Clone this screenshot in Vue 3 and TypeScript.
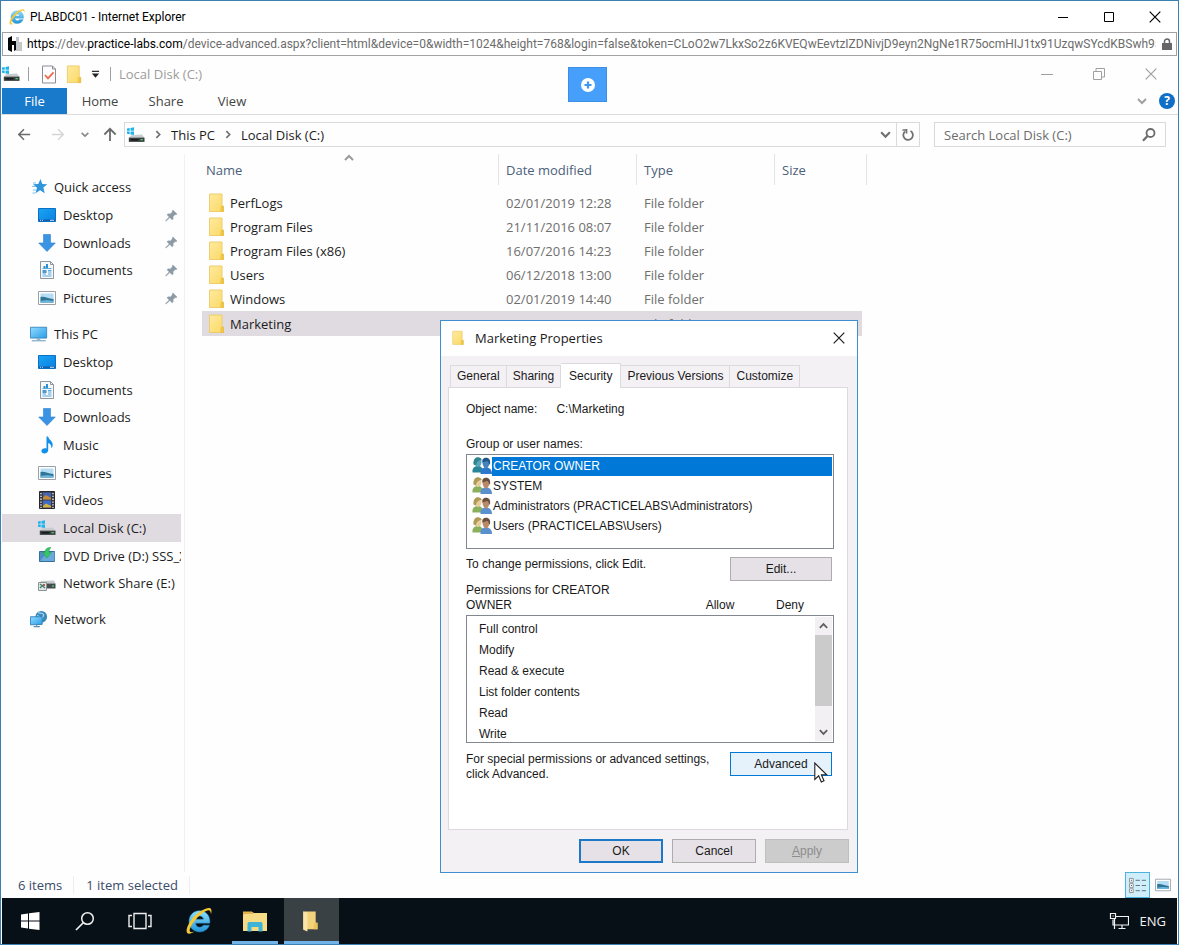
<script setup lang="ts">
import { ref } from 'vue'

interface NavItem {
  label: string
  icon: string
  root?: boolean
  pinned?: boolean
}
interface FileRow {
  name: string
  date: string
}

const ribbonTabs: string[] = ['Home', 'Share', 'View']

const navGroups: NavItem[][] = [
  [
    { label: 'Quick access', icon: 'star', root: true },
    { label: 'Desktop', icon: 'desktop', pinned: true },
    { label: 'Downloads', icon: 'download', pinned: true },
    { label: 'Documents', icon: 'document', pinned: true },
    { label: 'Pictures', icon: 'picture', pinned: true },
  ],
  [
    { label: 'This PC', icon: 'pc', root: true },
    { label: 'Desktop', icon: 'desktop' },
    { label: 'Documents', icon: 'document' },
    { label: 'Downloads', icon: 'download' },
    { label: 'Music', icon: 'music' },
    { label: 'Pictures', icon: 'picture' },
    { label: 'Videos', icon: 'video' },
    { label: 'Local Disk (C:)', icon: 'disk' },
    { label: 'DVD Drive (D:) SSS_X', icon: 'dvd' },
    { label: 'Network Share (E:)', icon: 'netdrive' },
  ],
  [{ label: 'Network', icon: 'network', root: true }],
]
const currentFolder = ref('Local Disk (C:)')

const files: FileRow[] = [
  { name: 'PerfLogs', date: '02/01/2019 12:28' },
  { name: 'Program Files', date: '21/11/2016 08:07' },
  { name: 'Program Files (x86)', date: '16/07/2016 14:23' },
  { name: 'Users', date: '06/12/2018 13:00' },
  { name: 'Windows', date: '02/01/2019 14:40' },
  { name: 'Marketing', date: '10/01/2019 08:17' },
]
const selectedFile = ref('Marketing')

const dialogTabs: string[] = ['General', 'Sharing', 'Security', 'Previous Versions', 'Customize']
const activeTab = ref('Security')

const principals: string[] = [
  'CREATOR OWNER',
  'SYSTEM',
  'Administrators (PRACTICELABS\\Administrators)',
  'Users (PRACTICELABS\\Users)',
]
const selectedPrincipal = ref('CREATOR OWNER')

const permissions: string[] = ['Full control', 'Modify', 'Read & execute', 'List folder contents', 'Read', 'Write']
</script>

<template>
  <div class="browser">
    <svg class="sprite" aria-hidden="true">
      <defs>
        <linearGradient id="gBlue" x1="0" y1="0" x2="1" y2="1">
          <stop offset="0" stop-color="#1aa5f5" /><stop offset="1" stop-color="#0a7fe0" />
        </linearGradient>
        <linearGradient id="gSky" x1="0" y1="0" x2="1" y2="1">
          <stop offset="0" stop-color="#8fdcff" /><stop offset="1" stop-color="#2a9ce6" />
        </linearGradient>
        <linearGradient id="gIe" x1="0" y1="0" x2="0" y2="1">
          <stop offset="0" stop-color="#8fe0fb" /><stop offset="1" stop-color="#2295d8" />
        </linearGradient>
        <linearGradient id="gFolder" x1="0" y1="0" x2="1" y2="1">
          <stop offset="0" stop-color="#ffeaa0" /><stop offset="1" stop-color="#fbd964" />
        </linearGradient>
      </defs>
      <symbol id="i-ie" viewBox="0 0 24 24">
        <path d="M12.500 3.700c-5 0-8.500 3.700-8.500 8.500s3.500 8.500 8.500 8.500c3.700 0 6.500-2 7.800-5.300h-4.800c-.7 1-1.600 1.500-2.900 1.500-1.900 0-3.100-1.100-3.300-3.200h11.400c.5-5.800-3-10-8.200-10zM9.300 10.600c.4-1.600 1.500-2.600 3.200-2.600s2.800 1 3.100 2.600z" fill="url(#gIe)" stroke="#2687bd" stroke-width=".4" />
        <path d="M21.600 6.800C22.300 4 22.200 2 20.600 1.600 17.500 1 10 5 5.500 11.500 2 16.500 1 21 3.300 22c1.200.5 3-.2 5-1.600-1.900.7-3 .7-3.500 0-.9-1.500 1-5.500 4.600-9.600C13.500 6 18.300 2.800 20.300 3.500c.9.4 1.200 1.500 1.300 3.300z" fill="#f5c836" />
      </symbol>
      <symbol id="i-disk" viewBox="0 0 18 16">
        <path d="M0 1.500 2.700 1v2.800H0zM3.500.9 7 .3v3.500H3.500zM0 4.600h2.700v2.600L0 6.800zM3.500 4.600H7V8l-3.500-.6z" fill="#1fb4ee" />
        <path d="M4 8.200 15 7.500l2.500 3.300H2z" fill="#c9cccf" />
        <path d="M1.800 10.600h15.700v4.300H1.800z" fill="#3c4145" />
        <path d="M3.500 12h8v1.500h-8z" fill="#17191b" />
        <path d="M13.500 12h2.300v1.300h-2.300z" fill="#45d15d" />
      </symbol>
      <symbol id="i-folder" viewBox="0 0 16 20">
        <path d="M1 1h12.500v12.500H15V18.500H1z" fill="url(#gFolder)" stroke="#ecca62" stroke-width=".9" />
        <path d="M12.500 18.500v-4l1-1.500H15v5.500z" fill="#f3c848" stroke="#e3b83c" stroke-width=".6" />
      </symbol>
      <symbol id="i-star" viewBox="0 0 18 18">
        <path d="m10.500 1 1.800 5 5 .2-3.900 3.400 1.300 5.600-4.600-2.900-4.600 3 1.500-5.500L3 6.200l5.300-.1z" fill="#2f96dc" />
        <path d="M3 5h3M2 8.500h4M3 12h3M2.500 15h3" stroke="#7cc4ee" stroke-width="1.200" />
      </symbol>
      <symbol id="i-desktop" viewBox="0 0 18 18">
        <path d="M.5 2.500h17v13H.5z" fill="url(#gBlue)" stroke="#0b6fc2" />
        <path d="M1 13.500h16v1.500H1z" fill="#0d5fae" />
        <path d="M2 14.300h1M4 14.300h1M12 14.300h4" stroke="#fff" stroke-width=".8" />
      </symbol>
      <symbol id="i-download" viewBox="0 0 18 18">
        <path d="M5.500.5h7V9h4.800L9 17.500.7 9h4.800z" fill="#3b93e3" stroke="#2a7fd0" stroke-width=".6" />
      </symbol>
      <symbol id="i-document" viewBox="0 0 18 18">
        <path d="M2.500.5h10l3 3v14h-13z" fill="#f6f8fa" stroke="#8f979e" />
        <path d="M12.500.5v3h3" fill="none" stroke="#8f979e" />
        <path d="M4.500 7.500h9M4.500 13h3.500M10 11h3.500M10 13h3.500M4.500 15h9M10 9.500h3.500" stroke="#5aa9dc" />
        <path d="M8 3h2v4H8zM5.500 5h2v2h-2z" fill="#2b8fd6" /><path d="M4.500 9h4v3h-4z" fill="#4b9bcf" />
      </symbol>
      <symbol id="i-picture" viewBox="0 0 18 18">
        <path d="M.5 2.500h17v13H.5z" fill="#fff" stroke="#9aa0a6" />
        <path d="M2.500 4.500h13v9h-13z" fill="#b4dcf4" />
        <path d="M2.500 8c4-1 7 1.500 13 2v3.500h-13z" fill="#2f7596" />
        <path d="M2.500 12c5-1 8-.7 13 0v1.500h-13z" fill="#6fb6dc" />
      </symbol>
      <symbol id="i-pc" viewBox="0 0 20 18">
        <path d="M.5 1.500h18v12H.5z" fill="url(#gSky)" stroke="#3686bd" />
        <path d="M7.500 14h4v1.500h-4z" fill="#8fa8b8" /><path d="M2 16.500h15.500" stroke="#77a8c9" stroke-width="1.300" />
      </symbol>
      <symbol id="i-music" viewBox="0 0 18 18">
        <path d="M8.500.5h1.600c.4 3 4.600 4.300 4.600 8.300 0 1.700-.6 2.700-1.500 3.500.6-3-1-4.600-3-5.300v7.300c0 2-1.600 3.200-3.800 3.200-1.800 0-3-1-3-2.400 0-1.700 1.600-2.900 3.500-2.900.6 0 1.100.1 1.600.3z" fill="#1290ea" />
      </symbol>
      <symbol id="i-video" viewBox="0 0 18 18">
        <path d="M1.500.5h15v17h-15z" fill="#3a3d42" stroke="#25272a" />
        <path d="M3 2v15M15 2v15" stroke="#f4f4f4" stroke-width="1.300" stroke-dasharray="1.300 1.500" />
        <path d="M5 1.500h8v7H5z" fill="#4563b4" /><path d="M5 6.500 8 4l5 3v1.500H5z" fill="#c48a35" />
        <path d="M5 9.500h8v7H5z" fill="#3f6bc4" /><path d="m5 15 3-2.500 5 2.500v1.500H5z" fill="#d5b23b" />
      </symbol>
      <symbol id="i-dvd" viewBox="0 0 18 18">
        <path d="M1.500 4.500h15v10h-15z" fill="#4b8fc4" stroke="#356f9e" />
        <path d="m2 14 8-9h6.500v9z" fill="#6aaadb" />
        <path d="M13 .5C8.500.5 7 2.500 7 5.500H4.500L9 11l4.500-5.500H11C10.800 3.500 11.500 1.500 13 .5z" fill="#37c565" stroke="#219a4a" stroke-width=".5" />
      </symbol>
      <symbol id="i-netdrive" viewBox="0 0 18 18">
        <path d="m3 7 13-.5 1.500 3H1z" fill="#c5c9cc" />
        <path d="M8 9.500h9.500v5H8z" fill="#454b4e" /><path d="M14 11.500h2v1.200h-2z" fill="#4fd567" />
        <path d="M.5 8.500h8v8h-8z" fill="#dfe6e4" stroke="#8b9493" />
        <path d="m2 10 5 4M2 14l3-3" stroke="#3d8269" stroke-width="1.300" /><path d="M5 10h2v2H5z" fill="#b45b58" />
      </symbol>
      <symbol id="i-network" viewBox="0 0 20 20">
        <circle cx="12.500" cy="7.500" r="6.500" fill="#3a88b9" />
        <path d="M9 3c2 1 5 0 6 2s-2 3-2 5M8 6l3 2" fill="none" stroke="#9fd3ee" stroke-width="1.500" />
        <path d="M.5 7.500h13V16l-13 .5z" fill="url(#gSky)" stroke="#2e7fb8" />
        <path d="M4 18.500h7M7.500 16.500v2" stroke="#5d8eae" stroke-width="1.200" />
      </symbol>
      <symbol id="i-pin" viewBox="0 0 14 14">
        <path d="m8.500 1 4.500 4.500-1.300.6-.7-.2-2.300 2.300.1 2.500-1 1L5.200 9.200 1.500 12.700l-.7.200.2-.8L4.500 8.500 2.200 6.200l1-1 2.600.1L8 3l-.3-.8z" fill="#8c9aa5" stroke="#8c9aa5" stroke-width=".5" />
      </symbol>
      <symbol id="i-users" viewBox="0 0 20 18">
        <path class="p-body-a" d="M.5 15.500C0 11.500 2 9 6 9s4.500 2.500 4.500 6.500z" />
        <path class="p-head-a" d="M2.500 4.500C2.500 2 4 .8 6 .8s3.800 1.500 3.600 4.200S8 10 6.200 10 2.500 7.500 2.500 4.500z" />
        <path class="p-fair" d="M1.500 7.500C1 3 3 .3 6 .3c2 0 3.300 1 3.700 2.600C7 3 4.500 4 4 8.500z" />
        <path class="p-body-b" d="M8.500 17c-.3-4.500 1.500-6.500 5.500-6.500s6 2.500 6 6.500z" />
        <path class="p-head-b" d="M10.500 5.500C10.500 3 12 1.500 14 1.500s3.500 1.500 3.500 4-1.700 6-3.500 6-3.500-3.500-3.500-6z" />
        <path class="p-hair" d="M10.500 5.500C9.800 2.300 11.500.8 14 .8s4.700 1.700 4.100 5.700l-1 1.500c0-2-.6-3.500-2.100-4-1.500.8-3 1-4.500 1.500z" />
      </symbol>
      <symbol id="i-chev" viewBox="0 0 12 8"><path d="m2 2 4 4 4-4" fill="none" stroke="currentColor" stroke-width="2" /></symbol>
      <symbol id="i-close" viewBox="0 0 12 12"><path d="m.7.7 10.600 10.600M11.300.7.700 11.300" fill="none" stroke="currentColor" stroke-width="1.200" /></symbol>
      <symbol id="i-mag" viewBox="0 0 16 16">
        <circle cx="9.500" cy="6" r="4" fill="none" stroke="currentColor" stroke-width="1.800" />
        <path d="M6.500 9 2 13.800" stroke="currentColor" stroke-width="2.200" />
      </symbol>
    </svg>

    <header class="titlebar">
      <svg class="ico18"><use href="#i-ie" /></svg>
      <h1 class="title">PLABDC01 - Internet Explorer</h1>
      <button class="win" aria-label="Minimize"><svg viewBox="0 0 12 12"><path d="M1 6.500h10" stroke="currentColor" /></svg></button>
      <button class="win" aria-label="Maximize"><svg viewBox="0 0 12 12"><path d="M1.500 1.500h9v9h-9z" fill="none" stroke="currentColor" /></svg></button>
      <button class="win" aria-label="Close"><svg><use href="#i-close" /></svg></button>
    </header>

    <div class="urlbar">
      <svg class="site" viewBox="0 0 16 16">
        <path d="M9 1h3v5h3v9H9z" fill="#c4c6c8" />
        <path d="M1 2 5 0v5h4v9l-2 1V9H5v7l-4-2z" fill="#050505" />
      </svg>
      <div class="url"><b>https</b>://dev.<b>practice-labs.com</b>/device-advanced.aspx?client=html&amp;device=0&amp;width=1024&amp;height=768&amp;login=false&amp;token=CLoO2w7LkxSo2z6KVEQwEevtzIZDNivjD9eyn2NgNe1R75ocmHIJ1tx91UzqwSYcdKBSwh950</div>
      <svg class="lock" viewBox="0 0 10 12"><path d="M2.500 5V3.500a2.500 2.500 0 0 1 5 0V5" fill="none" stroke="#666" stroke-width="1.500" /><path d="M0 5h10v7H0z" fill="#666" /></svg>
    </div>

    <div class="quickbar">
      <svg class="ico18"><use href="#i-disk" /></svg>
      <i class="bar"></i>
      <button class="qbtn" aria-label="Properties">
        <svg viewBox="0 0 16 18"><path d="M1.500.5h10l3 3v14h-13z" fill="#fdfdff" stroke="#8d8d95" /><path d="M11.500.5v3h3" fill="none" stroke="#8d8d95" /><path d="m4 9.500 3 3.300 5.500-6" fill="none" stroke="#ee6b48" stroke-width="1.800" /></svg>
      </button>
      <button class="qbtn" aria-label="New folder"><svg><use href="#i-folder" /></svg></button>
      <button class="drop" aria-label="Customize toolbar"><svg viewBox="0 0 10 10"><path d="M1 1.500h8" stroke="#222" stroke-width="1.300" /><path d="M1 4h8L5 8.500z" fill="#222" /></svg></button>
      <i class="bar"></i>
      <span class="wintitle">Local Disk (C:)</span>
      <button class="ewin" aria-label="Minimize window"><svg viewBox="0 0 12 12"><path d="M0 6.500h12" stroke="currentColor" /></svg></button>
      <button class="ewin" aria-label="Restore window"><svg viewBox="0 0 12 12"><path d="M.5 3.500h8v8h-8zM3 3.500V.5h8.500V9h-3" fill="none" stroke="currentColor" /></svg></button>
      <button class="ewin" aria-label="Close window"><svg><use href="#i-close" /></svg></button>
    </div>

    <button class="connect" aria-label="Show device bar">
      <svg viewBox="0 0 14 14"><circle cx="7" cy="7" r="7" fill="#fff" /><path d="M7 3.500v7M3.500 7h7" stroke="#3d97f3" stroke-width="2.200" /></svg>
    </button>

    <nav class="ribbon">
      <button class="file">File</button>
      <button v-for="t in ribbonTabs" :key="t">{{ t }}</button>
      <span class="fill"></span>
      <button class="expand" aria-label="Expand ribbon"><svg><use href="#i-chev" /></svg></button>
      <button class="help" aria-label="Help">?</button>
    </nav>

    <div class="navrow">
      <button class="arrow" aria-label="Back"><svg viewBox="0 0 16 14"><path d="M15 7H2M8 1 2 7l6 6" fill="none" stroke="#6a6a6a" stroke-width="1.700" /></svg></button>
      <button class="arrow" aria-label="Forward"><svg viewBox="0 0 16 14"><path d="M1 7h13M8 1l6 6-6 6" fill="none" stroke="#d6d6d6" stroke-width="1.700" /></svg></button>
      <button class="recent" aria-label="Recent locations"><svg><use href="#i-chev" /></svg></button>
      <button class="up" aria-label="Up"><svg viewBox="0 0 14 16"><path d="M7 15V2M1 8l6-6 6 6" fill="none" stroke="#6a6a6a" stroke-width="1.900" /></svg></button>
      <div class="address">
        <svg class="ico18"><use href="#i-disk" /></svg>
        <svg class="sep"><use href="#i-chev" /></svg>
        <button>This PC</button>
        <svg class="sep"><use href="#i-chev" /></svg>
        <button>Local Disk (C:)</button>
        <span class="fill"></span>
        <button class="addrdrop" aria-label="Previous locations"><svg><use href="#i-chev" /></svg></button>
        <button class="refresh" aria-label="Refresh"><svg viewBox="0 0 14 14"><path d="M9.500 3a4.800 4.800 0 1 1-5.500.5" fill="none" stroke="#707070" stroke-width="1.800" /><path d="M5.500 1v4.500M1.500 2H6.300" fill="none" stroke="#707070" stroke-width="1.700" /></svg></button>
      </div>
      <label class="search">
        <input type="text" placeholder="Search Local Disk (C:)" aria-label="Search Local Disk (C:)" />
        <svg><use href="#i-mag" /></svg>
      </label>
    </div>

    <main class="body">
      <aside class="tree">
        <ul v-for="(g, gi) in navGroups" :key="gi">
          <li v-for="n in g" :key="n.label" :class="{ root: n.root, current: n.label === currentFolder }">
            <svg class="ico18"><use :href="'#i-' + n.icon" /></svg>
            <span>{{ n.label }}</span>
            <svg v-if="n.pinned" class="pin"><use href="#i-pin" /></svg>
          </li>
        </ul>
      </aside>
      <section class="files">
        <table>
          <colgroup><col class="c-name" /><col class="c-mid" /><col class="c-mid" /><col class="c-size" /></colgroup>
          <thead>
            <tr>
              <th class="sorted">Name<svg><use href="#i-chev" /></svg></th>
              <th>Date modified</th>
              <th>Type</th>
              <th>Size</th>
            </tr>
          </thead>
          <tbody>
            <tr v-for="f in files" :key="f.name" :class="{ selected: f.name === selectedFile }" @click="selectedFile = f.name">
              <td><div class="fname"><svg><use href="#i-folder" /></svg>{{ f.name }}</div></td>
              <td>{{ f.date }}</td>
              <td>File folder</td>
              <td></td>
            </tr>
          </tbody>
        </table>
      </section>
    </main>

    <footer class="status">
      <span>6 items</span>
      <span>1 item selected</span>
      <span class="fill"></span>
      <button class="view on" aria-label="Details view">
        <svg viewBox="0 0 20 18"><path d="M1.500 1.500h4v4h-4zM1.500 7h4v4h-4zM1.500 12.500h4v4h-4z" fill="#fff" stroke="#8b8f92" /><path d="M3 3.500h1M3 9h1M3 14.500h1" stroke="#333" /><path d="M8 3.500h4.500M14.500 3.500H19M8 9h4.500M14.500 9H19M8 14.500h4.500M14.500 14.500H19" stroke="#5e6b74" /></svg>
      </button>
      <button class="view" aria-label="Large icons view"><svg class="small"><use href="#i-picture" /></svg></button>
    </footer>

    <footer class="taskbar">
      <button aria-label="Start"><svg class="t20" viewBox="0 0 20 20"><path d="M1 3.500 8 2.500v7H1zM9 2.300 19.500 1v8.500H9zM1 10.500h7v7l-7-1zM9 10.500h10.500V19L9 17.700z" fill="#fff" /></svg></button>
      <button aria-label="Search"><svg class="t20" viewBox="0 0 20 20"><circle cx="12.500" cy="7.500" r="5.800" fill="none" stroke="#eee" stroke-width="1.500" /><path d="m8.500 11.500-7.500 7.500" stroke="#eee" stroke-width="1.700" /></svg></button>
      <button aria-label="Task view"><svg class="t24" viewBox="0 0 24 20"><path d="M6 2.500h12v15H6zM4 4.500H1v11h3M20 4.500h3v11h-3" fill="none" stroke="#eee" stroke-width="1.400" /></svg></button>
      <button class="app" aria-label="Internet Explorer"><svg class="t30"><use href="#i-ie" /></svg></button>
      <button class="app running" aria-label="File Explorer">
        <svg class="t26" viewBox="0 0 26 22"><path d="M1 2h9l2 1h13v18H1z" fill="#f7dc86" /><path d="M1 1.500h9l1.500 2.500H3l-2 1z" fill="#e3b64c" /><path d="M5.500 21.500V14c0-1.500 1-2 2-2h11c1 0 2 .5 2 2v7.500h-4V17h-7v4.500z" fill="#3fb4d6" /></svg>
      </button>
      <button class="app running active" aria-label="Marketing Properties">
        <svg class="t24" viewBox="0 0 24 24"><path d="M2.500 1.500h13.500V14h2v7H5.500l-3 0z" fill="#f3d27c" /><path d="M2.500 1.500 7 3v20.500l-4.500-2z" fill="#fbe5a6" /><path d="M14 21v-6l1.500-2h.5v1h2v7z" fill="#ecc257" /></svg>
      </button>
      <span class="fill"></span>
      <svg class="net" viewBox="0 0 20 18"><path d="M7 4.500h12.500v8.500H4V7.500M9.500 16.500h7M13 13v3.500M5.500 7v10" fill="none" stroke="#f2f2f2" stroke-width="1.200" /><path d="M1.500 1.500h5v5h-5z" fill="none" stroke="#f2f2f2" stroke-width="1.200" /><path d="M3.500 4h1.200" stroke="#f2f2f2" /></svg>
      <span class="lang">ENG</span>
    </footer>

    <section class="dialog" role="dialog" aria-labelledby="dlg-title">
      <header class="dhead">
        <svg class="dfolder"><use href="#i-folder" /></svg>
        <h2 id="dlg-title">Marketing Properties</h2>
        <button aria-label="Close dialog"><svg><use href="#i-close" /></svg></button>
      </header>
      <div class="tabs" role="tablist">
        <button v-for="t in dialogTabs" :key="t" role="tab" :class="{ on: t === activeTab }" :aria-selected="t === activeTab" @click="activeTab = t">{{ t }}</button>
      </div>
      <div class="panel">
        <p class="object"><span>Object name:</span><span>C:\Marketing</span></p>
        <p id="grp" class="grouplabel">Group or user names:</p>
        <ul class="users" role="listbox" aria-labelledby="grp">
          <li v-for="p in principals" :key="p" role="option" :aria-selected="p === selectedPrincipal" :class="{ on: p === selectedPrincipal }" @click="selectedPrincipal = p">
            <svg><use href="#i-users" /></svg><span>{{ p }}</span>
          </li>
        </ul>
        <div class="editrow">
          <p>To change permissions, click Edit.</p>
          <button class="btn wide">Edit...</button>
        </div>
        <div class="permhead">
          <p>Permissions for {{ selectedPrincipal }}</p>
          <span>Allow</span>
          <span>Deny</span>
        </div>
        <div class="perms">
          <ul>
            <li v-for="p in permissions" :key="p">{{ p }}</li>
          </ul>
          <div class="scroll">
            <button aria-label="Scroll up"><svg class="flip"><use href="#i-chev" /></svg></button>
            <i class="thumb"></i>
            <button aria-label="Scroll down"><svg><use href="#i-chev" /></svg></button>
          </div>
        </div>
        <div class="advrow">
          <p>For special permissions or advanced settings, click Advanced.</p>
          <button class="btn wide hot">Advanced</button>
        </div>
      </div>
      <div class="actions">
        <button class="btn primary">OK</button>
        <button class="btn">Cancel</button>
        <button class="btn" disabled><u>A</u>pply</button>
      </div>
      <svg class="cursor" viewBox="0 0 14 22"><path d="M.8 1v16.500l3.900-3.700 2.600 6.200 2.700-1.200-2.600-6h5.300z" fill="#fff" stroke="#222" stroke-width="1.100" /></svg>
    </section>
  </div>
</template>

<style>
body { margin: 0; background: #fff; }
</style>

<style scoped>
* { box-sizing: border-box; }
.browser {
  position: relative;
  display: flex;
  flex-direction: column;
  min-height: 100vh;
  border: 1px solid #3a80b0;
  background: #fefefe;
  color: #1c1c1c;
  font: 13px/18px "Open Sans", "Noto Sans", sans-serif;
}
.sprite { display: block; width: 0; height: 0; flex: none; position: absolute; }
button { margin: 0; padding: 0; border: 0; background: none; color: inherit; font: inherit; display: flex; align-items: center; justify-content: center; }
ul, p, h1, h2 { margin: 0; padding: 0; list-style: none; font: inherit; }
svg { flex: none; display: block; }
.fill { flex: 1; }
.ico18 { width: 18px; height: 18px; }

.titlebar { display: flex; align-items: center; height: 31px; padding-left: 7px; color: #000; background: #fff; }
.title { flex: 1; margin-left: 4px; font: 12px/16px Roboto, "Open Sans", sans-serif; }
.win { width: 46px; height: 28px; color: #000; }
.win svg { width: 12px; height: 12px; }

.urlbar { display: flex; align-items: center; height: 24px; margin: 0 1px; padding: 0 4px; border: 1px solid #a2a2a2; background: #fff; }
.site { width: 16px; height: 16px; }
.url { flex: 1; min-width: 0; overflow: hidden; white-space: nowrap; margin: 0 6px 0 4px; color: #6c6c6c; font: 12px/18px Roboto, "Open Sans", sans-serif; }
.url b { font-weight: 400; color: #000; }
.lock { width: 10px; height: 12px; }

.quickbar { display: flex; align-items: center; height: 32px; padding: 4px 1px 0; color: #9c9c9c; }
.bar { width: 1px; height: 14px; background: #a0a0a0; margin: 0 8px; }
.qbtn { width: 16px; height: 20px; margin: 0 5px 0 4px; }
.qbtn svg { width: 16px; height: 19px; }
.drop { width: 14px; height: 20px; margin-left: 1px; }
.drop svg { width: 9px; height: 9px; }
.wintitle { flex: 1; }
.ewin { width: 52px; height: 24px; color: #a0a0a0; }
.ewin svg { width: 12px; height: 12px; }
.connect { position: absolute; top: 66px; left: 567px; width: 39px; height: 35px; background: #469ffb; border: 1px solid #3d8fe6; }
.connect svg { width: 14px; height: 14px; }

.ribbon { display: flex; align-items: stretch; height: 27px; padding: 0 3px 0 1px; border-bottom: 1px solid #dcdcdc; color: #444; }
.ribbon button { width: 66px; }
.ribbon .file { background: #1979ca; color: #fff; width: 65px; }
.ribbon .expand { width: 24px; color: #a0a0a0; }
.expand svg { width: 12px; height: 8px; }
.ribbon .help { align-self: center; width: 16px; height: 16px; margin-left: 5px; border-radius: 8px; background: #0f6fc6; color: #fff; font-weight: 700; font-size: 12px; line-height: 16px; }

.navrow { display: flex; align-items: center; height: 39px; padding: 0 12px; }
.arrow { width: 34px; height: 24px; }
.arrow:first-child { width: 22px; margin-right: 6px; }
.arrow svg { width: 14px; height: 13px; }
.recent { width: 20px; height: 24px; color: #8a8a8a; }
.recent svg { width: 10px; height: 7px; }
.up { width: 29px; height: 24px; }
.up svg { width: 14px; height: 15px; }
.address { flex: 1; display: flex; align-items: center; height: 25px; padding-left: 2px; border: 1px solid #dadada; }
.sep { width: 10px; height: 7px; margin: 0 8px; transform: rotate(-90deg); color: #707070; }
.addrdrop { width: 22px; color: #707070; }
.addrdrop svg { width: 13px; height: 9px; }
.refresh { width: 23px; align-self: stretch; border-left: 1px solid #dadada; }
.refresh svg { width: 14px; height: 14px; }
.search { display: flex; align-items: center; width: 232px; height: 25px; margin-left: 14px; border: 1px solid #dadada; padding: 0 8px 0 9px; color: #6c6c6c; }
.search input { flex: 1; min-width: 0; border: 0; outline: 0; padding: 0; background: none; font: inherit; color: #444; }
.search input::placeholder { color: #6c6c6c; opacity: 1; }
.search svg { width: 16px; height: 16px; }

.body { flex: 1; display: flex; }
.tree { width: 184px; padding: 19px 3px 0 1px; border-right: 1px solid #f1f1f1; }
.tree ul { margin-bottom: 8px; }
.tree li { display: flex; align-items: center; height: 28px; padding-left: 36px; overflow: hidden; white-space: nowrap; }
.tree li:nth-child(3n) { height: 27px; }
.tree li.root { padding-left: 28px; }
.tree li span { flex: 1; min-width: 0; overflow: hidden; margin-left: 7px; }
.tree li.root span { margin-left: 6px; }
.tree .current { background: #dfdbe0; }
.pin { width: 13px; height: 13px; margin-right: 3px; }

.files { flex: 1; min-width: 0; padding-left: 17px; }
table { border-collapse: separate; border-spacing: 0; table-layout: fixed; width: 665px; }
.c-name { width: 297px; }
.c-mid { width: 138px; }
.c-size { width: 92px; }
th { height: 31px; padding: 0 0 0 7px; border-right: 1px solid #e4e4e4; text-align: left; font-weight: 400; color: #4c607a; }
th.sorted { position: relative; padding-left: 4px; }
th.sorted svg { position: absolute; left: 50%; margin-left: -7px; top: 0; width: 12px; height: 8px; transform: rotate(180deg); color: #9a9a9a; }
thead::after { content: ""; display: block; height: 6px; }
td { height: 24px; padding: 0 0 0 7px; color: #6e6e6e; }
td:first-child { color: #1c1c1c; padding-left: 6px; }
td:last-child { border-right: 5px solid transparent; background-clip: padding-box; }
.fname { display: flex; align-items: center; gap: 5px; }
.fname svg { width: 17px; height: 20px; }
.selected td { height: 25px; background-color: #dfdbe0; }

.status { display: flex; align-items: center; height: 26px; padding: 0 3px 0 5px; color: #3b4b6b; }
.status span:not(.fill) { padding: 0 11px 0 12px; border-right: 1px solid #eee; }
.view { width: 25px; height: 26px; }
.view svg { width: 19px; height: 17px; }
.view svg.small { width: 16px; height: 16px; }
.view.on { background: #cdeefa; border: 1px solid #4db2dc; }

.taskbar { display: flex; align-items: stretch; height: 46px; margin: 0 1px; background: #070f17; color: #f2f2f2; }
.taskbar button { width: 55px; }
.taskbar .app { margin-left: 4px; padding-top: 3px; border-bottom: 3px solid transparent; }
.taskbar .running { width: 46px; margin-left: 6px; border-bottom-color: #6fb3e8; }
.taskbar .active { width: 55px; background: #3a4144; }
.t20 { width: 20px; height: 20px; }
.t24 { width: 24px; height: 22px; }
.t26 { width: 26px; height: 22px; }
.t30 { width: 30px; height: 30px; }
.net { width: 20px; height: 18px; align-self: center; }
.lang { align-self: center; margin: 0 11px; }

.dialog { position: absolute; left: 439px; top: 319px; width: 418px; display: flex; flex-direction: column; border: 1px solid #3f8fd0; background: #f4f1f5; color: #1a1a1a; font: 12px/15px "Liberation Sans", Arial, sans-serif; padding-bottom: 9px; }
.dhead { display: flex; align-items: center; height: 35px; padding: 0 5px 2px 11px; background: #fff; font: 13px/18px "Open Sans", "Noto Sans", sans-serif; }
.dfolder { width: 12px; height: 16px; }
.dhead h2 { flex: 1; margin-left: 11px; }
.dhead button { width: 26px; height: 26px; }
.dhead button svg { width: 12px; height: 12px; }
.tabs { display: flex; align-items: flex-end; height: 31px; padding-left: 9px; }
.tabs button { height: 22px; padding: 0 6px; border: 1px solid #dcdade; border-bottom: 0; border-left-width: 0; }
.tabs button:first-child { border-left-width: 1px; }
.tabs .on { height: 25px; padding: 0 8px; margin-bottom: -1px; background: #fff; position: relative; }
.panel { margin: 0 9px 0 7px; padding: 14px 13px 0 17px; height: 443px; border: 1px solid #dcdade; background: #fff; }
.object { display: flex; gap: 19px; }
.grouplabel { margin-top: 20px; }
.users { margin-top: 2px; height: 95px; padding: 1px; border: 1px solid #828790; }
.users li { display: flex; align-items: center; height: 20px; padding-left: 4px; }
.users svg { width: 20px; height: 18px; }
.users span { flex: 1; padding: 2px 1px; }
.users .on span { background: #0078d7; color: #fff; }
.users { --fair: #b09a55; --head-a: #e6cf9c; --body-a: #8bb05c; --head-b: #b98a68; --body-b: #5b90cf; --hair: #6b5040; }
.users .on { --fair: #2f8290; --head-a: #58a8bd; --body-a: #2b8598; --head-b: #4484bd; --body-b: #2b78cc; --hair: #1e5687; }
.p-head-a { fill: var(--head-a); }
.p-fair { fill: var(--fair); }
.p-body-a { fill: var(--body-a); }
.p-head-b { fill: var(--head-b); }
.p-body-b { fill: var(--body-b); }
.p-hair { fill: var(--hair); }
.editrow, .advrow { display: flex; justify-content: space-between; padding-right: 2px; }
.editrow { margin-top: 8px; }
.advrow { margin-top: 9px; }
.advrow p { width: 252px; }
.btn { width: 84px; height: 24px; border: 1px solid #adadad; background: #e5e1e6; }
.btn.wide { width: 102px; }
.btn.hot { background: #e5f1fb; border-color: #0078d7; }
.btn.primary { border: 2px solid #1d78c8; }
.btn:disabled { background: #cccccc; border-color: #bfbfbf; color: #8c8c8c; }
.permhead { display: flex; align-items: flex-end; margin-top: 2px; }
.permhead p { width: 219px; padding-right: 60px; }
.permhead span { width: 70px; text-align: center; }
.perms { display: flex; height: 128px; margin-top: 2px; padding: 1px; border: 1px solid #828790; overflow: hidden; }
.perms ul { flex: 1; padding: 2px 0 0 11px; }
.perms li { height: 21px; line-height: 21px; }
.scroll { display: flex; flex-direction: column; justify-content: space-between; width: 17px; background: #f2f0f3; color: #606060; }
.scroll button { height: 18px; }
.scroll svg { width: 11px; height: 8px; }
.thumb { height: 71px; margin-bottom: auto; background: #cbcbcb; }
.flip { transform: rotate(180deg); }
.actions { display: flex; justify-content: flex-end; gap: 9px; margin-top: 9px; padding-right: 8px; }
.cursor { position: absolute; left: 373px; top: 441px; width: 14px; height: 22px; }
</style>
